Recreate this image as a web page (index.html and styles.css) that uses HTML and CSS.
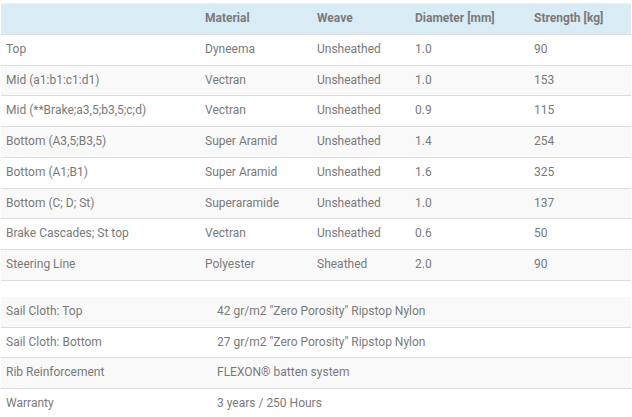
FILE: index.html
```html
<!DOCTYPE html>
<html>
<head>
<meta charset="utf-8">
<link rel="stylesheet" href="styles.css">
</head>
<body>
<div class="wrap">
<table class="specs lines">
  <colgroup>
    <col class="c1"><col class="c2"><col class="c3"><col class="c4"><col class="c5">
  </colgroup>
  <thead>
    <tr><th></th><th>Material</th><th>Weave</th><th>Diameter [mm]</th><th>Strength [kg]</th></tr>
  </thead>
  <tbody>
    <tr><td>Top</td><td>Dyneema</td><td>Unsheathed</td><td>1.0</td><td>90</td></tr>
    <tr><td>Mid (a1:b1:c1:d1)</td><td>Vectran</td><td>Unsheathed</td><td>1.0</td><td>153</td></tr>
    <tr><td>Mid (**Brake;a3,5;b3,5;c;d)</td><td>Vectran</td><td>Unsheathed</td><td>0.9</td><td>115</td></tr>
    <tr><td>Bottom (A3,5;B3,5)</td><td>Super Aramid</td><td>Unsheathed</td><td>1.4</td><td>254</td></tr>
    <tr><td>Bottom (A1;B1)</td><td>Super Aramid</td><td>Unsheathed</td><td>1.6</td><td>325</td></tr>
    <tr><td>Bottom (C; D; St)</td><td>Superaramide</td><td>Unsheathed</td><td>1.0</td><td>137</td></tr>
    <tr><td>Brake Cascades; St top</td><td>Vectran</td><td>Unsheathed</td><td>0.6</td><td>50</td></tr>
    <tr><td>Steering Line</td><td>Polyester</td><td>Sheathed</td><td>2.0</td><td>90</td></tr>
  </tbody>
</table>
<table class="specs cloth">
  <colgroup><col class="d1"><col class="d2"></colgroup>
  <tbody>
    <tr><td>Sail Cloth: Top</td><td>42 gr/m2 "Zero Porosity" Ripstop Nylon</td></tr>
    <tr><td>Sail Cloth: Bottom</td><td>27 gr/m2 "Zero Porosity" Ripstop Nylon</td></tr>
    <tr><td>Rib Reinforcement</td><td>FLEXON® batten system</td></tr>
    <tr><td>Warranty</td><td>3 years / 250 Hours</td></tr>
  </tbody>
</table>
</div>
</body>
</html>
```
FILE: styles.css
```css
html, body {
  margin: 0;
  padding: 0;
  background: #ffffff;
}
body {
  font-family: Roboto, "Liberation Sans", sans-serif;
  font-size: 12px;
  color: #7a7a7a;
}
.wrap {
  padding: 3px 1px 0 1px;
}
.specs {
  width: 630px;
  border-collapse: collapse;
  table-layout: fixed;
}
.specs td, .specs th {
  padding: 5px 5px;
  line-height: 19.75px;
  text-align: left;
  border-bottom: 1px solid #dddddd;
  white-space: nowrap;
}
.lines {
  border-top: 1px solid #eeeeee;
}
.lines thead th {
  background: #d9ecf5;
  font-weight: 700;
  color: #7a7a7a;
}
.c1 { width: 199px; }
.c2 { width: 112px; }
.c3 { width: 98px; }
.c4 { width: 119px; }
.c5 { width: 102px; }
.lines tbody tr:nth-child(even) td { background: #f9f9f9; }
.cloth {
  margin-top: 16px;
}
.d1 { width: 211px; }
.d2 { width: 419px; }
.cloth tbody tr:nth-child(odd) td { background: #f9f9f9; }
```
